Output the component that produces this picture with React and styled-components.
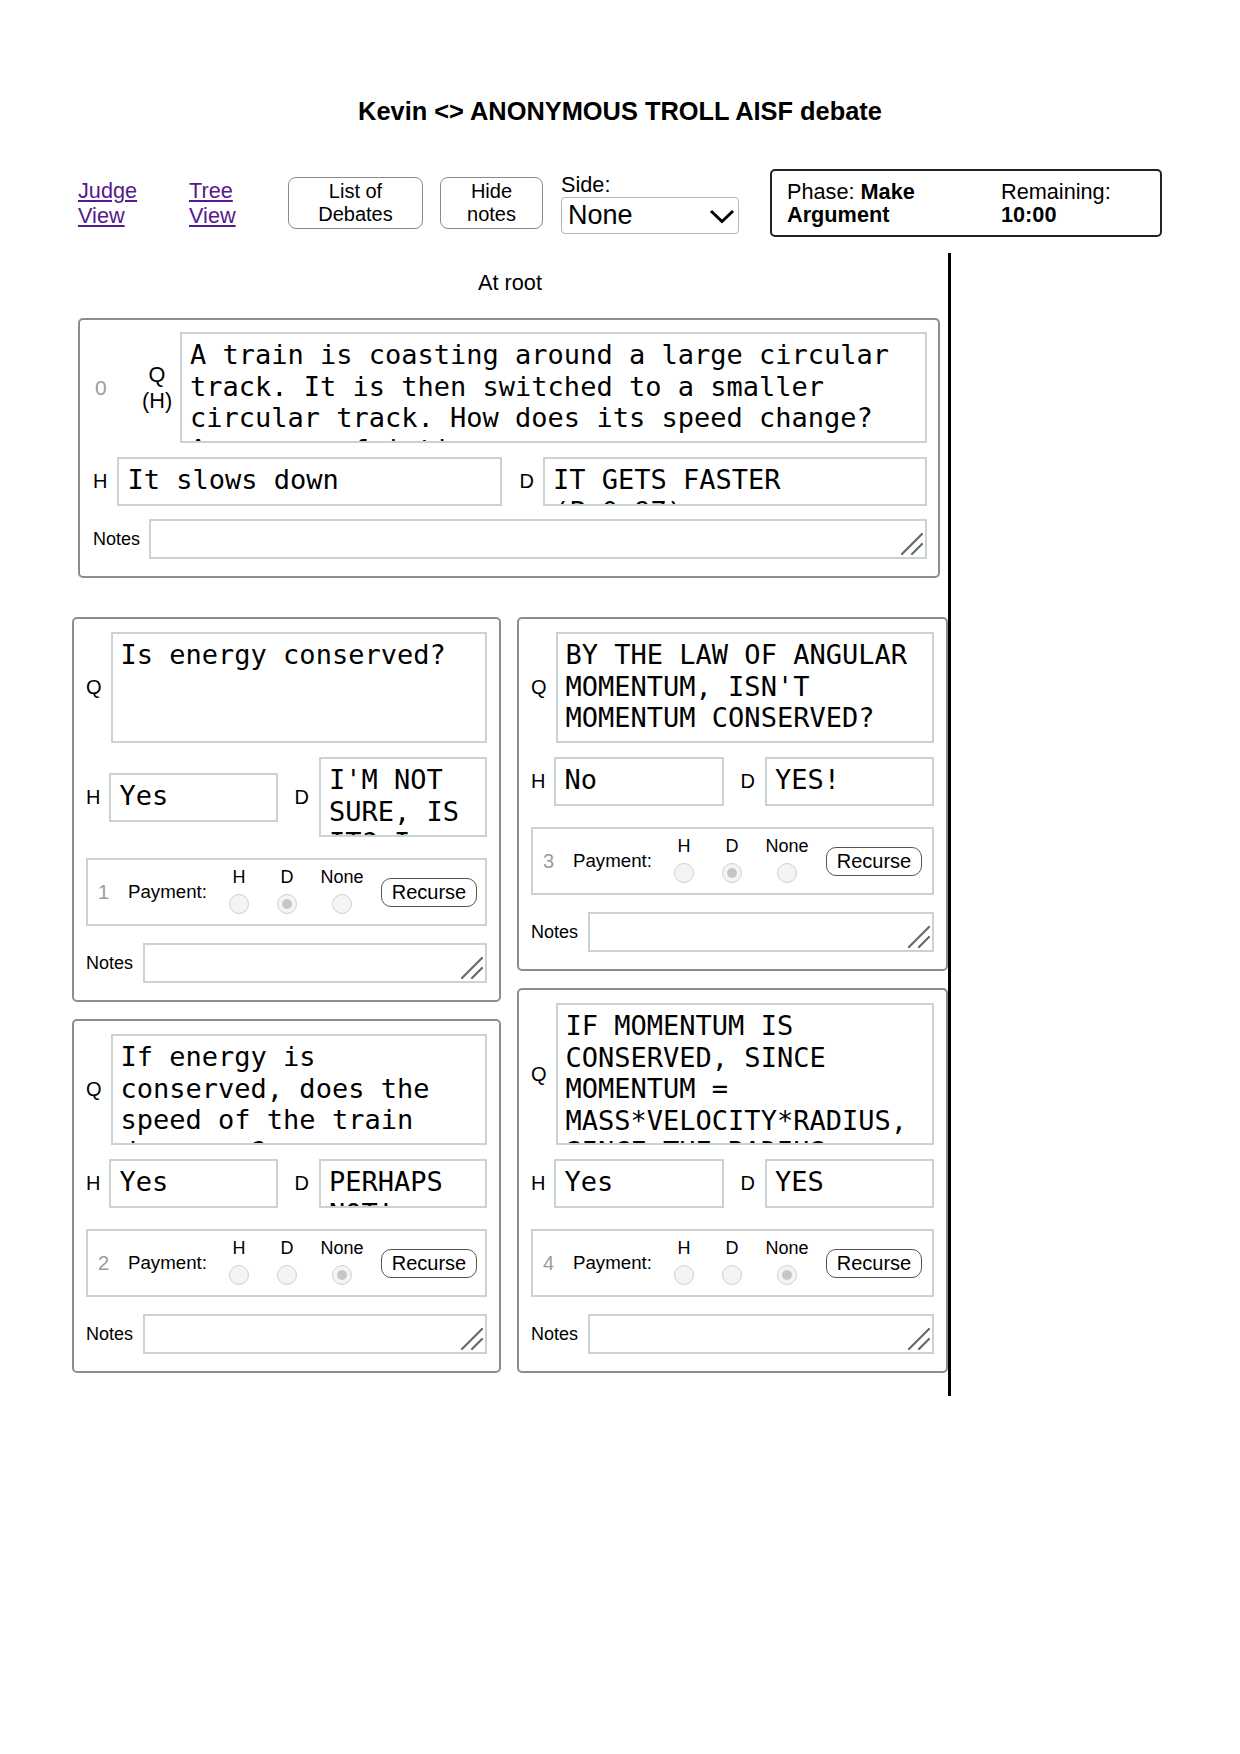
import React from 'react'
import styled, { createGlobalStyle } from 'styled-components'

const GlobalStyle = createGlobalStyle`
  * { box-sizing: border-box; }
  body {
    margin: 0;
    background: #fff;
    color: #000;
    font-family: "Liberation Sans", Arial, sans-serif;
    font-size: 21.7px;
  }
`

const Page = styled.div`
  width: 1240px;
  padding-top: 96px;
`

const Title = styled.h3`
  margin: 0;
  text-align: center;
  font-size: 25.4px;
  font-weight: 700;
  line-height: 30px;
`

const TopBar = styled.div`
  display: flex;
  align-items: center;
  margin-top: 43px;
  padding-left: 78px;
`

const NavLink = styled.a`
  display: block;
  width: 60px;
  margin-right: ${p => p.$gap}px;
  color: #551a8b;
  text-decoration: underline;
  line-height: 25px;
  cursor: pointer;
`

const TopButton = styled.button`
  width: ${p => p.$w}px;
  height: 52px;
  margin-right: ${p => p.$gap || 0}px;
  padding: 0;
  border: 1.5px solid #8a8a8a;
  border-radius: 8px;
  background: #fff;
  color: #000;
  font-family: inherit;
  font-size: 20px;
  line-height: 23px;
`

const SideField = styled.div`
  display: flex;
  flex-direction: column;
  margin-left: 18px;
`

const SideLabel = styled.span`
  line-height: 25px;
`

const Select = styled.div`
  width: 178px;
  height: 37px;
  display: flex;
  align-items: center;
  justify-content: space-between;
  padding: 0 3px 0 6px;
  border: 1.5px solid #b5b5b5;
  border-radius: 4px;
  font-size: 27px;
`

const PhaseBox = styled.div`
  width: 392px;
  height: 68px;
  margin-left: 31px;
  display: flex;
  align-items: center;
  padding-left: 15px;
  border: 2px solid #222;
  border-radius: 5px;
  line-height: 23px;
`

const PhaseCell = styled.div`
  width: ${p => p.$w ? `${p.$w}px` : 'auto'};
`

const Main = styled.main`
  width: 879px;
  margin: 16px 0 0 72px;
  padding: 16.5px 0 23px;
  border-right: 3px solid #000;
`

const Crumb = styled.div`
  text-align: center;
  line-height: 25px;
  margin-bottom: 23.5px;
`

const Card = styled.div`
  border: 2px solid #8d8d8d;
  border-radius: 5px;
  padding: ${p => p.$root ? '12px 11px 17px 13px' : '13px 12px 17px'};
  margin: ${p => p.$root ? '0 8px 0 6px' : '0'};
`

const Row = styled.div`
  display: flex;
  align-items: center;
  margin-top: ${p => p.$top || 0}px;
`

const Digit = styled.span`
  width: ${p => p.$w}px;
  margin-left: ${p => p.$ml || 0}px;
  color: #9c9c9c;
  font-size: ${p => p.$size || 20}px;
  flex-shrink: 0;
`

const RootLabel = styled.div`
  width: 30px;
  margin: 0 8px 0 ${p => p.$ml}px;
  text-align: center;
  line-height: 26px;
  flex-shrink: 0;
`

const Label = styled.span`
  font-size: ${p => p.$size || 20}px;
  margin-right: ${p => p.$gap}px;
  margin-left: ${p => p.$ml || 0}px;
  flex-shrink: 0;
`

const Box = styled.textarea`
  flex: 1;
  width: 0;
  min-width: 0;
  height: ${p => p.$rows * 31 + 18}px;
  padding: 5px 8px 0;
  border: 2px solid #c9d3d3;
  border-radius: 0;
  background: #fff;
  color: #000;
  font-family: "DejaVu Sans Mono", "Liberation Mono", monospace;
  font-size: 27px;
  line-height: 31.6px;
  overflow: hidden;
  resize: none;
  outline: none;
`

const NoteWrap = styled.div`
  flex: 1;
  min-width: 0;
  position: relative;
  height: 40px;
`

const NoteBox = styled.textarea`
  width: 100%;
  height: 100%;
  display: block;
  border: 2px solid #c9d3d3;
  background: #fff;
  resize: none;
  outline: none;
  overflow: hidden;
`

const Grip = styled.svg`
  position: absolute;
  right: 3px;
  bottom: 3px;
  pointer-events: none;
`

const PayBox = styled.div`
  height: 68px;
  margin-top: 21px;
  display: flex;
  align-items: center;
  padding-left: 10px;
  border: 2px solid #c9d3d3;
`

const PayLabel = styled.span`
  width: 87px;
  font-size: 18.7px;
`

const Choice = styled.div`
  width: ${p => p.$w}px;
  display: flex;
  flex-direction: column;
  align-items: center;
  padding-bottom: 4px;
  font-size: 18px;
  line-height: 20px;
`

const Radio = styled.span`
  width: 20px;
  height: 20px;
  margin-top: 7px;
  display: flex;
  align-items: center;
  justify-content: center;
  border: 1.5px solid #d0d0d0;
  border-radius: 50%;
  background: #f4f4f4;
  &::after {
    content: '';
    width: 10px;
    height: 10px;
    border-radius: 50%;
    background: ${p => p.$on ? '#c6c6c6' : 'transparent'};
  }
`

const Recurse = styled.button`
  width: 96px;
  height: 29px;
  margin-left: 8px;
  padding: 0;
  border: 1.5px solid #555;
  border-radius: 10px;
  background: #fff;
  color: #000;
  font-family: inherit;
  font-size: 20px;
`

const Columns = styled.div`
  display: flex;
  gap: 16px;
  margin-top: 39px;
`

const Column = styled.div`
  display: flex;
  flex-direction: column;
  gap: 17px;
  width: ${p => p.$w}px;
  min-width: 0;
  flex: none;
`

function Notes({ gap, top }) {
  return (
    <Row $top={top}>
      <Label $gap={gap} $size={18}>Notes</Label>
      <NoteWrap>
        <NoteBox readOnly />
        <Grip width="24" height="24" viewBox="0 0 24 24">
          <line x1="22" y1="2" x2="2" y2="22" stroke="#666" strokeWidth="2.2" strokeLinecap="round" />
          <line x1="22" y1="12" x2="12" y2="22" stroke="#666" strokeWidth="2.2" strokeLinecap="round" />
        </Grip>
      </NoteWrap>
    </Row>
  )
}

function NodeCard({ node }) {
  return (
    <Card>
      <Row>
        <Label $gap={9}>Q</Label>
        <Box $rows={node.qRows} readOnly defaultValue={node.q} />
      </Row>
      <Row $top={14}>
        <Label $gap={9}>H</Label>
        <Box $rows={1} readOnly defaultValue={node.h} />
        <Label $gap={10} $ml={17}>D</Label>
        <Box $rows={node.dRows} readOnly defaultValue={node.d} />
      </Row>
      <PayBox>
        <Digit $w={30}>{node.id}</Digit>
        <PayLabel>Payment:</PayLabel>
        {[['H', 48], ['D', 48], ['None', 62]].map(([k, w]) => (
          <Choice key={k} $w={w}>
            {k}
            <Radio $on={node.pay === k} />
          </Choice>
        ))}
        <Recurse>Recurse</Recurse>
      </PayBox>
      <Notes gap={10} top={17} />
    </Card>
  )
}

const nodes = [
  {
    id: 1, qRows: 3, dRows: 2, pay: 'D',
    q: 'Is energy conserved?',
    h: 'Yes',
    d: "I'M NOT SURE, IS IT? I THINK SO.",
  },
  {
    id: 2, qRows: 3, dRows: 1, pay: 'None',
    q: 'If energy is conserved, does the speed of the train decrease?',
    h: 'Yes',
    d: 'PERHAPS NOT!',
  },
  {
    id: 3, qRows: 3, dRows: 1, pay: 'D',
    q: "BY THE LAW OF ANGULAR MOMENTUM, ISN'T MOMENTUM CONSERVED?",
    h: 'No',
    d: 'YES!',
  },
  {
    id: 4, qRows: 4, dRows: 1, pay: 'None',
    q: 'IF MOMENTUM IS CONSERVED, SINCE MOMENTUM = MASS*VELOCITY*RADIUS, SINCE THE RADIUS DECREASES, THE VELOCITY MUST INCREASE!',
    h: 'Yes',
    d: 'YES',
  },
]

export default function App() {
  return (
    <Page>
      <GlobalStyle />
      <Title>Kevin &lt;&gt; ANONYMOUS TROLL AISF debate</Title>

      <TopBar>
        <NavLink $gap={51}>Judge View</NavLink>
        <NavLink $gap={39}>Tree View</NavLink>
        <TopButton $w={135} $gap={17}>List of<br />Debates</TopButton>
        <TopButton $w={103}>Hide<br />notes</TopButton>
        <SideField>
          <SideLabel>Side:</SideLabel>
          <Select>
            None
            <svg width="26" height="16" viewBox="0 0 26 16">
              <polyline points="2,3 13,13.5 24,3" fill="none" stroke="#000" strokeWidth="3" />
            </svg>
          </Select>
        </SideField>
        <PhaseBox>
          <PhaseCell $w={214}>Phase: <b>Make</b><br /><b>Argument</b></PhaseCell>
          <PhaseCell>Remaining:<br /><b>10:00</b></PhaseCell>
        </PhaseBox>
      </TopBar>

      <Main>
        <Crumb>At root</Crumb>
        <Card $root>
          <Row>
            <Digit $w={12} $ml={2} $size={21}>0</Digit>
            <RootLabel $ml={35}>Q<br />(H)</RootLabel>
            <Box
              $rows={3}
              readOnly
              defaultValue="A train is coasting around a large circular track. It is then switched to a smaller circular track. How does its speed change? Assume no friction."
            />
          </Row>
          <Row $top={14}>
            <Label $gap={10}>H</Label>
            <Box $rows={1} readOnly defaultValue="It slows down" />
            <Label $gap={9} $ml={18}>D</Label>
            <Box $rows={1} readOnly defaultValue="IT GETS FASTER (P=0.97)" />
          </Row>
          <Notes gap={9} top={13} />
        </Card>

        <Columns>
          <Column $w={429}>
            <NodeCard node={nodes[0]} />
            <NodeCard node={nodes[1]} />
          </Column>
          <Column $w={431}>
            <NodeCard node={nodes[2]} />
            <NodeCard node={nodes[3]} />
          </Column>
        </Columns>
      </Main>
    </Page>
  )
}
